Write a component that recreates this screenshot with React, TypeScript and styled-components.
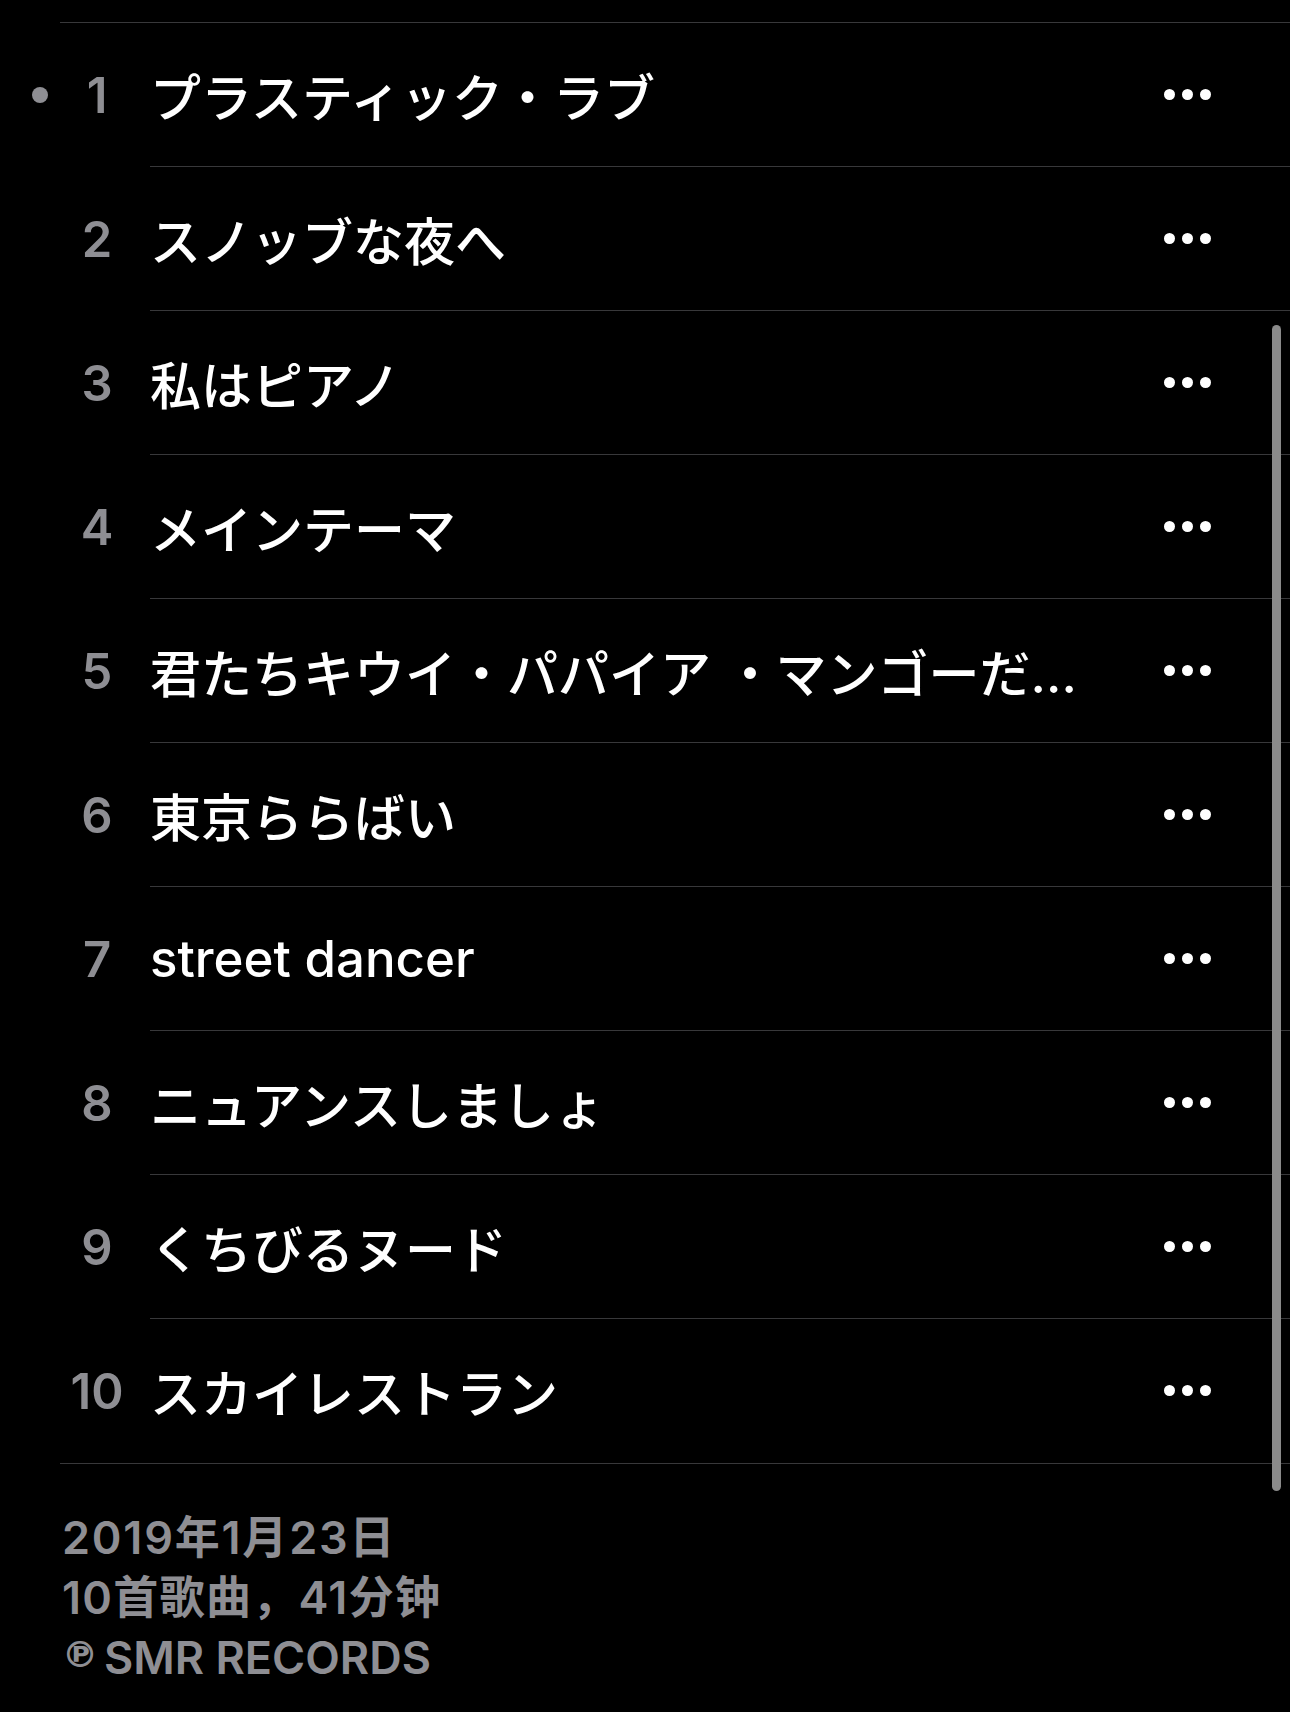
import styled, { createGlobalStyle } from "styled-components";

const GlobalStyle = createGlobalStyle`
  html, body {
    margin: 0;
    padding: 0;
    background: #000;
  }
`;

const tracks = [
  "プラスティック・ラブ",
  "スノッブな夜へ",
  "私はピアノ",
  "メインテーマ",
  "君たちキウイ・パパイア ・マンゴーだね。",
  "東京ららばい",
  "street dancer",
  "ニュアンスしましょ",
  "くちびるヌード",
  "スカイレストラン",
];

const Page = styled.div`
  position: relative;
  width: 1290px;
  min-height: 1712px;
  background: #000;
  padding-top: 22px;
  box-sizing: border-box;
  font-family: Inter, "Noto Sans CJK JP", sans-serif;
  overflow: hidden;
`;

const Rule = styled.div`
  height: 1px;
  margin-left: 60px;
  background: #38383a;
`;

const Row = styled.div`
  display: grid;
  grid-template-columns: 150px 1fr;
  height: 144px;
`;

const Lead = styled.div`
  display: grid;
  grid-template-columns: 61px 72px;
  align-items: center;
`;

const NowPlaying = styled.span<{ $on: boolean }>`
  justify-self: end;
  margin-right: 13px;
  width: 16px;
  height: 16px;
  border-radius: 50%;
  background: ${(p) => (p.$on ? "#8e8e93" : "transparent")};
`;

const Number = styled.span`
  text-align: center;
  font-size: 49px;
  font-weight: 600;
  color: #8e8e93;
`;

const Body = styled.div<{ $last: boolean }>`
  display: flex;
  align-items: center;
  gap: 53px;
  min-width: 0;
  padding: 0 79px 0 1px;
  border-bottom: 1px solid ${(p) => (p.$last ? "transparent" : "#38383a")};
`;

const Title = styled.span`
  flex: 1;
  min-width: 0;
  margin-left: -1px;
  font-size: 51px;
  font-weight: 500;
  color: #fff;
  white-space: nowrap;
  overflow: hidden;
  text-overflow: ellipsis;
`;

const More = styled.button`
  display: flex;
  gap: 7px;
  padding: 0;
  border: 0;
  background: none;

  & span {
    width: 11px;
    height: 11px;
    border-radius: 50%;
    background: #fff;
  }
`;

const Footer = styled.div`
  padding: 44px 62px 0;
  font-family: Inter, "Noto Sans CJK SC", sans-serif;
  font-size: 45px;
  line-height: 60px;
  font-weight: 600;
  color: #8e8e93;
`;

const FooterLine = styled.div<{ $spread?: number }>`
  height: 60px;
  letter-spacing: ${(p) => p.$spread ?? 0}px;
`;

const Phono = styled.span`
  display: inline-block;
  font-family: "DejaVu Sans", sans-serif;
  font-size: 36px;
  line-height: 1;
  vertical-align: 7px;
  margin-right: 6px;
`;

const ScrollThumb = styled.div`
  position: absolute;
  top: 325px;
  right: 9px;
  width: 9px;
  height: 1166px;
  border-radius: 5px;
  background: #8a8a8a;
`;

export default function App() {
  return (
    <Page>
      <GlobalStyle />
      <Rule />
      {tracks.map((title, i) => (
        <Row key={i}>
          <Lead>
            <NowPlaying $on={i === 0} />
            <Number>{i + 1}</Number>
          </Lead>
          <Body $last={i === tracks.length - 1}>
            <Title>{title}</Title>
            <More aria-label="more">
              <span />
              <span />
              <span />
            </More>
          </Body>
        </Row>
      ))}
      <Rule />
      <Footer>
        <FooterLine $spread={1.8}>2019年1月23日</FooterLine>
        <FooterLine $spread={1.3}>10首歌曲，41分钟</FooterLine>
        <FooterLine>
          <Phono>℗</Phono>SMR RECORDS
        </FooterLine>
      </Footer>
      <ScrollThumb />
    </Page>
  );
}
